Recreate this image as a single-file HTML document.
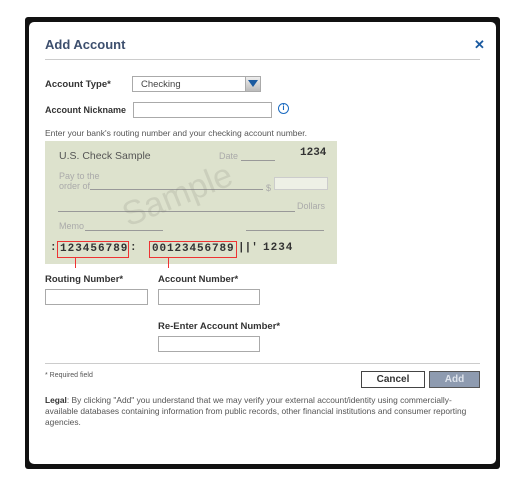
<!DOCTYPE html>
<html><head><style>
*{margin:0;padding:0;box-sizing:border-box}
body{width:532px;height:480px;background:#fff;font-family:"Liberation Sans",Arial,sans-serif;position:relative;overflow:hidden}
.frame{position:absolute;left:25px;top:17px;width:475px;height:452px;background:#111;border-radius:3px}
.inner{position:absolute;left:29px;top:22px;width:467px;height:442px;background:#fff;border-radius:5px}
.a{position:absolute}
.lbl{font-size:9.5px;font-weight:bold;color:#333}
.inp{position:absolute;border:1px solid #aaa;background:#fff;height:16px}
.m{position:absolute;font-size:11px;font-family:'Liberation Mono',monospace;font-weight:bold;color:#333;white-space:pre}
</style></head><body>
<div class="frame"></div><div class="inner"></div>
<div class="a" style="left:45px;top:37px;font-size:13px;font-weight:bold;color:#3d4f6e">Add Account</div>
<div class="a" style="left:474px;top:37px;font-size:13px;font-weight:bold;color:#1a5aa0">✕</div>
<div class="a" style="left:45px;top:59px;width:435px;height:1px;background:#ccc"></div>
<div class="a lbl" style="left:45px;top:79px">Account Type*</div>
<div class="inp" style="left:132px;top:76px;width:129px;font-size:9.5px;color:#444;padding:2px 0 0 8px">Checking</div>
<div class="a" style="left:245px;top:77px;width:15px;height:14px;background:linear-gradient(#eee,#bbb);border-left:1px solid #aaa"></div>
<div class="a" style="left:248px;top:80px;width:0;height:0;border-left:5px solid transparent;border-right:5px solid transparent;border-top:7px solid #1a5aa0"></div>
<div class="a lbl" style="left:45px;top:105px;font-size:9px">Account Nickname</div>
<div class="inp" style="left:133px;top:102px;width:139px"></div>
<div class="a" style="left:278px;top:103px;width:11px;height:11px;border:1.5px solid #1a6ac0;border-radius:50%;font-size:8px;font-weight:bold;color:#1a6ac0;text-align:center;line-height:8px">i</div>
<div class="a" style="left:45px;top:128px;font-size:8.5px;color:#555">Enter your bank's routing number and your checking account number.</div>
<div class="a" style="left:45px;top:141px;width:292px;height:123px;background:#dde2cd"></div>
<div class="a" style="left:59px;top:150px;font-size:10.5px;color:#555">U.S. Check Sample</div>
<div class="a" style="left:219px;top:151px;font-size:9px;color:#aaa">Date</div>
<div class="a" style="left:241px;top:160px;width:34px;height:1px;background:#999"></div>
<div class="m" style="left:300px;top:147px">1234</div>
<div class="a" style="left:59px;top:171px;font-size:9px;color:#aaa;line-height:10px">Pay to the<br>order of</div>
<div class="a" style="left:90px;top:189px;width:173px;height:1px;background:#999"></div>
<div class="a" style="left:266px;top:183px;font-size:9px;color:#aaa">$</div>
<div class="a" style="left:274px;top:177px;width:54px;height:13px;background:#eef0e6;border:1px solid #ccc"></div>
<div class="a" style="left:58px;top:211px;width:237px;height:1px;background:#999"></div>
<div class="a" style="left:297px;top:201px;font-size:9px;color:#aaa">Dollars</div>
<div class="a" style="left:59px;top:221px;font-size:9px;color:#aaa">Memo</div>
<div class="a" style="left:85px;top:230px;width:78px;height:1px;background:#999"></div>
<div class="a" style="left:246px;top:230px;width:78px;height:1px;background:#999"></div>
<div class="a" style="left:120px;top:176px;font-size:34px;color:rgba(120,120,110,0.18);transform:rotate(-22deg)">Sample</div>
<div class="m" style="left:50px;top:242px">:</div>
<div class="m" style="left:130px;top:242px">:</div>
<div class="m" style="left:238px;top:242px">||'</div>
<div class="m" style="left:263px;top:242px;letter-spacing:1px">1234</div>
<div class="m" style="left:57px;top:241px;width:72px;height:17px;border:1.5px solid #e33;padding-left:2px;line-height:14px;letter-spacing:1px">123456789</div>
<div class="m" style="left:149px;top:241px;width:88px;height:17px;border:1.5px solid #e33;padding-left:2px;line-height:14px;letter-spacing:0.9px">00123456789</div>
<div class="a" style="left:75px;top:258px;width:1px;height:10px;background:#e33"></div>
<div class="a" style="left:168px;top:258px;width:1px;height:10px;background:#e33"></div>
<div class="a lbl" style="left:45px;top:274px">Routing Number*</div>
<div class="a lbl" style="left:158px;top:274px">Account Number*</div>
<div class="inp" style="left:45px;top:289px;width:103px"></div>
<div class="inp" style="left:158px;top:289px;width:102px"></div>
<div class="a lbl" style="left:158px;top:321px">Re-Enter Account Number*</div>
<div class="inp" style="left:158px;top:336px;width:102px"></div>
<div class="a" style="left:45px;top:363px;width:435px;height:1px;background:#ccc"></div>
<div class="a" style="left:45px;top:372px;font-size:7px;color:#555">* Required field</div>
<div class="a" style="left:361px;top:371px;width:64px;height:17px;border:1px solid #444;font-size:10px;font-weight:bold;color:#333;text-align:center;line-height:15px">Cancel</div>
<div class="a" style="left:429px;top:371px;width:51px;height:17px;background:#8e9bb0;border:1px solid #555;font-size:10px;font-weight:bold;color:#dfe4ec;text-align:center;line-height:15px">Add</div>
<div class="a" style="left:45px;top:395px;width:440px;font-size:8.4px;color:#555;line-height:11px"><b style="color:#333">Legal</b>: By clicking "Add" you understand that we may verify your external account/identity using commercially-<br>available databases containing information from public records, other financial institutions and consumer reporting<br>agencies.</div>
</body></html>
